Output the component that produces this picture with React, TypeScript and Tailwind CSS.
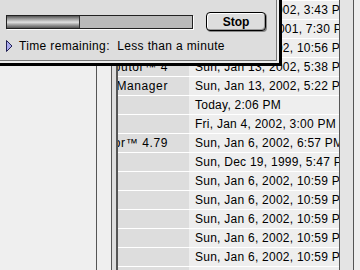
const rows = [
  { name: "", date: "Sun, Jan 13, 2002, 3:43 PM" },
  { name: "", date: "Sun, Dec 30, 2001, 7:30 PM" },
  { name: "", date: "Sun, Jan 6, 2002, 10:56 PM" },
  { name: "Distributor™ 4", date: "Sun, Jan 13, 2002, 5:38 PM" },
  { name: "Extension Manager", date: "Sun, Jan 13, 2002, 5:22 PM" },
  { name: "", date: "Today, 2:06 PM" },
  { name: "", date: "Fri, Jan 4, 2002, 3:00 PM" },
  { name: "Communicator™ 4.79", date: "Sun, Jan 6, 2002, 6:57 PM" },
  { name: "", date: "Sun, Dec 19, 1999, 5:47 PM" },
  { name: "", date: "Sun, Jan 6, 2002, 10:59 PM" },
  { name: "", date: "Sun, Jan 6, 2002, 10:59 PM" },
  { name: "", date: "Sun, Jan 6, 2002, 10:59 PM" },
  { name: "", date: "Sun, Jan 6, 2002, 10:59 PM" },
  { name: "", date: "Sun, Jan 6, 2002, 10:59 PM" },
  { name: "", date: "Sun, Jan 6, 2002, 10:59 PM" },
];

const App = () => {
  return (
    <div className="relative w-[360px] h-[270px] overflow-hidden flex bg-[#efefef] text-[12px] text-black font-['Liberation_Sans',Arial,sans-serif]">
      {/* list window behind */}
      <div className="w-[96px] h-full bg-[#efefef]" />
      <div className="w-px h-full bg-[#555]" />
      <div className="w-[14px] h-full bg-[#efefef]" />
      <div className="w-px h-full bg-[#555]" />
      <div className="w-[4px] h-full bg-[#dddddd]" />
      <div className="w-[2px] h-full bg-[#555]" />

      <div className="flex flex-col w-[221px] h-full tracking-[0.25px]">
        {rows.map((r, i) => (
          <div key={i} className="flex h-[19px] shrink-0 border-t border-white">
            <div className="w-[71px] h-full bg-[#dddddd] flex items-center justify-end pr-[21px] overflow-hidden whitespace-nowrap tracking-[0.6px]">
              {r.name}
            </div>
            <div className="w-[150px] h-full bg-[#eeeeee] flex items-center pl-[6px] overflow-hidden whitespace-nowrap">
              {r.date}
            </div>
          </div>
        ))}
      </div>

      <div className="w-px h-full bg-[#555]" />
      <div className="w-[13px] h-full bg-[#e4e4e4]" />
      <div className="w-px h-full bg-[#555]" />
      <div className="flex-1 h-full bg-[#eeeeee]" />

      {/* progress dialog */}
      <div className="absolute top-0 left-0 border-r-[3px] border-b-[3px] border-black">
        <div className="border-r-2 border-b-2 border-[#eeeeee]">
          <div className="w-[277px] h-[61px] border-r border-b border-[#777] bg-[#dddddd] flex flex-col pl-[6px] pt-[12px]">
            <div className="flex items-start">
              <div className="mt-[3px] w-[187px] h-[14px] border border-[#222] bg-[#bababa] shadow-[1px_1px_0_#fff] flex">
                <div className="w-[73px] h-full border-r border-[#333] bg-[linear-gradient(to_bottom,#555,#8a8a8a_18%,#c8c8c8_42%,#e0e0e0_52%,#9a9a9a_75%,#555)]" />
              </div>
              <button className="ml-[13px] w-[60px] h-[19px] rounded-[4px] border border-black bg-[#dddddd] shadow-[inset_1px_1px_0_#fff,inset_-1px_-1px_0_#999,1px_1px_0_#888] font-bold text-[12px] leading-none flex items-center justify-center">
                Stop
              </button>
            </div>
            <div className="flex items-center mt-[8px]">
              <svg width="7" height="12" viewBox="0 0 7 12" className="shrink-0">
                <polygon points="0.5,0.5 6,6 0.5,11.5" fill="#aaaaee" stroke="#222255" strokeWidth="1" />
              </svg>
              <span className="ml-[6px] leading-[14px] whitespace-nowrap tracking-[0.35px]">
                Time remaining:&nbsp; Less than a minute
              </span>
            </div>
          </div>
        </div>
      </div>
    </div>
  );
};

export default App;
